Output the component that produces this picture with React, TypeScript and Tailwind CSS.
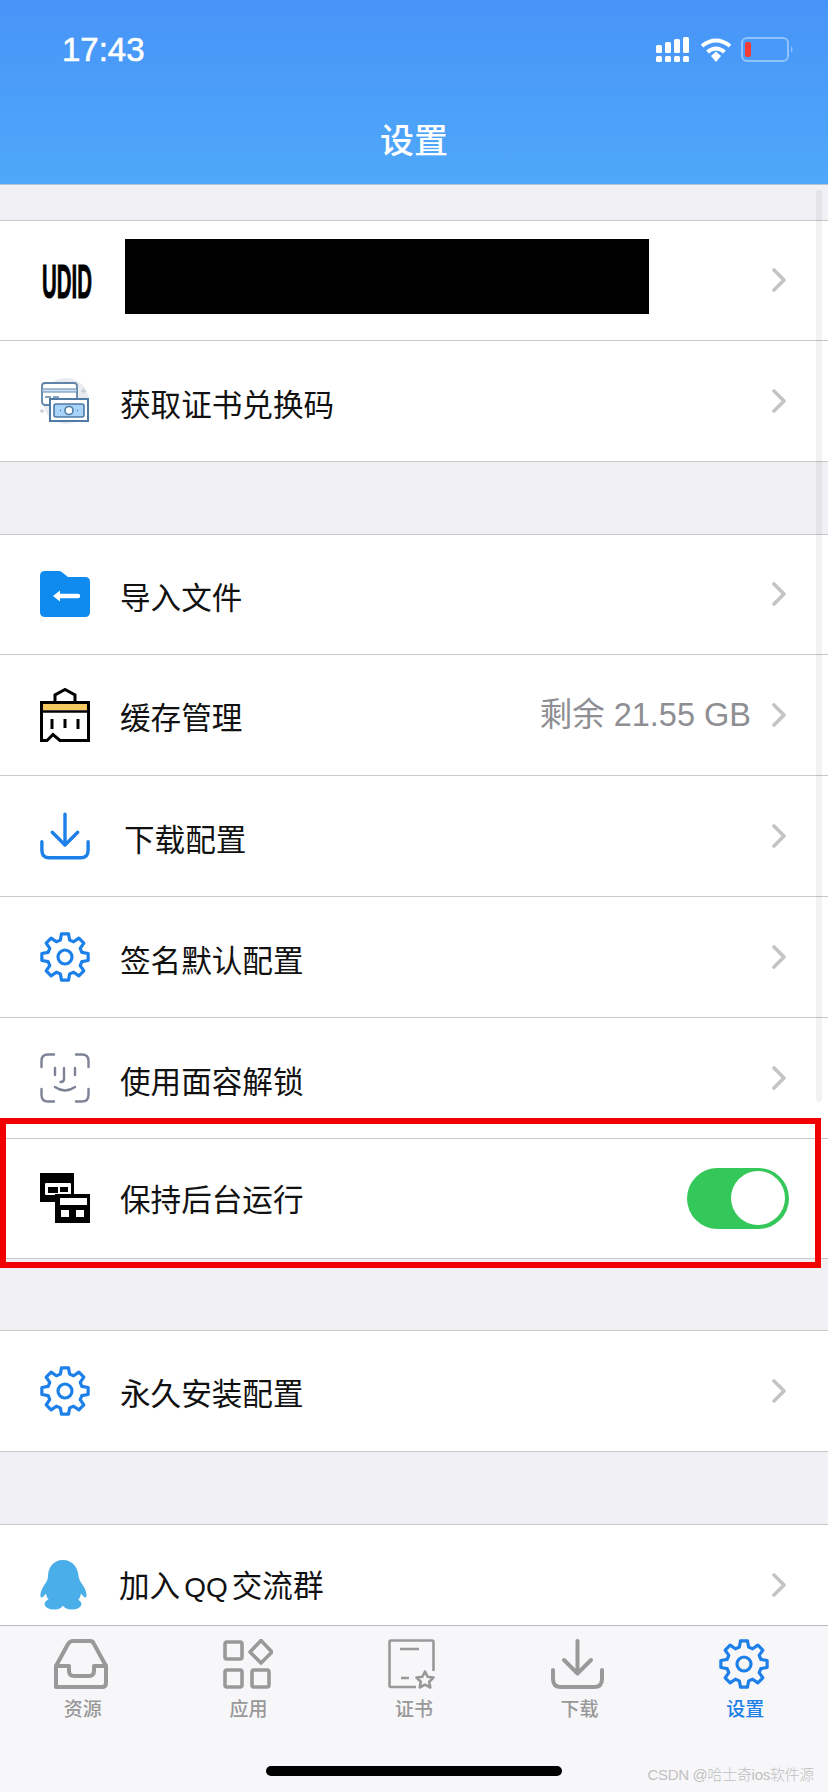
import type { ReactNode } from "react";

const BLUE = "#1c80e8";
const GRAY = "#999999";

function gearPath(size: number, outer: number, inner: number) {
  const c = size / 2;
  const pts: string[] = [];
  for (let i = 0; i < 8; i++) {
    const a = (i * Math.PI) / 4 - Math.PI / 2;
    const offsets: [number, number][] = [
      [-0.27, inner],
      [-0.15, outer],
      [0.15, outer],
      [0.27, inner],
    ];
    offsets.forEach(([d, r]) => {
      pts.push(`${c + r * Math.cos(a + d)},${c + r * Math.sin(a + d)}`);
    });
  }
  return `M${pts.join("L")}Z`;
}

function GearIcon() {
  return (
    <svg width="50" height="50" viewBox="0 0 50 50" fill="none" stroke={BLUE} strokeWidth="3.2" strokeLinejoin="round">
      <path d={gearPath(50, 23.4, 17.5)} />
      <circle cx="25" cy="25" r="7" />
    </svg>
  );
}

function DownloadIcon({ color, sw }: { color: string; sw: number }) {
  return (
    <svg width="53" height="50" viewBox="0 0 53 50" fill="none" stroke={color} strokeWidth={sw} strokeLinecap="round" strokeLinejoin="round">
      <path d="M26.5 2V34" />
      <path d="M13 21L26.5 34.5L40 21" />
      <path d="M2 31V40Q2 48 10 48H43Q51 48 51 40V31" />
    </svg>
  );
}

function UdidIcon() {
  return (
    <svg width="52" height="64" viewBox="0 0 52 64" className="overflow-visible">
      <text
        x="1"
        y="49.500"
        textLength="50"
        lengthAdjust="spacingAndGlyphs"
        fontFamily="Liberation Sans"
        fontWeight="700"
        fontSize="48"
        stroke="#000"
        strokeWidth="1"
      >
        UDID
      </text>
    </svg>
  );
}

function MoneyIcon() {
  return (
    <svg width="50" height="46" viewBox="0 0 50 46" fill="none">
      <circle cx="26" cy="23" r="23" fill="#e9edf1" />
      <rect x="2" y="5" width="35" height="22" rx="3" fill="#fff" stroke="#5f84a8" strokeWidth="1.8" />
      <path d="M2 11H37V14H2Z" fill="#cfe2f5" stroke="#5f84a8" strokeWidth="1" />
      <path d="M5 19H11M13 19H19" stroke="#5f84a8" strokeWidth="1.6" />
      <rect x="10" y="21" width="38" height="22" fill="#fff" stroke="#4e7aa3" strokeWidth="2" />
      <rect x="14" y="26" width="30" height="13" rx="2" fill="#a8d4fb" stroke="#4e7aa3" strokeWidth="1.6" />
      <circle cx="29" cy="32.5" r="4" fill="#fff" stroke="#4e7aa3" strokeWidth="1.6" />
      <path d="M20 32.5H21M37 32.5H38" stroke="#4e7aa3" strokeWidth="1.6" />
      <path d="M41 13H46M43.5 10.5V15.5M0 33H4M2 31V35" stroke="#c5ccd3" strokeWidth="1.4" />
    </svg>
  );
}

function FolderIcon() {
  return (
    <svg width="50" height="46" viewBox="0 0 50 46">
      <path d="M0 5Q0 0 5 0H19Q21 0 23 2L28 6H45Q50 6 50 11V41Q50 46 45 46H5Q0 46 0 41Z" fill="#0f8bf0" />
      <path d="M20 25H38" stroke="#fff" strokeWidth="4.4" strokeLinecap="round" />
      <path d="M13 25L20 19.5V30.5Z" fill="#fff" />
    </svg>
  );
}

function CacheIcon() {
  return (
    <svg width="50" height="54" viewBox="0 0 50 54" fill="none">
      <path d="M3 15.5H47V22H3Z" fill="#f5c95f" />
      <path d="M1.5 14.5H48.5V52.5H20L13 46.5L7 52.5H1.5Z" stroke="#000" strokeWidth="3" />
      <path d="M2 23.5H48" stroke="#000" strokeWidth="2.4" />
      <path d="M15 14V7L25 1.5L35 7V14" stroke="#000" strokeWidth="3" />
      <path d="M12 31V41M25 31V40M38 31V41" stroke="#000" strokeWidth="3" />
    </svg>
  );
}

function FaceIcon() {
  return (
    <svg width="50" height="50" viewBox="0 0 50 50" fill="none" stroke="#7d8296" strokeWidth="2.4" strokeLinecap="round">
      <path d="M1.5 14V8Q1.5 1.5 8 1.5H14" />
      <path d="M36 1.5H42Q48.5 1.5 48.5 8V14" />
      <path d="M1.5 36V42Q1.5 48.5 8 48.5H14" />
      <path d="M36 48.5H42Q48.5 48.5 48.5 42V36" />
      <path d="M15 15V22M35 15V22" />
      <path d="M24 15V26Q24 29 20.5 29" />
      <path d="M15 34Q25 41 35 34" />
    </svg>
  );
}

function KeepIcon() {
  return (
    <svg width="50" height="50" viewBox="0 0 50 50">
      <path d="M0 0H34V29H0Z" fill="#000" />
      <rect x="5" y="10" width="26" height="12" rx="1" fill="#fff" />
      <path d="M8 14H18V20H8ZM20 14H28V19H20Z" fill="#000" />
      <path d="M15 21H50V50H15Z" fill="#000" />
      <path d="M20 25H47V32H20Z" fill="#fff" />
      <path d="M21 37H29V44H21ZM36 37H44V44H36Z" fill="#fff" />
    </svg>
  );
}

function QQIcon() {
  return (
    <svg width="47" height="50" viewBox="0 0 47 50" fill="#4aaee9">
      <path d="M23 0C33 0 38 8 38.500 16C39 19 40 21 42 24C45 28 47 33 46.500 36.500C46 38.500 44 37.500 41 33.500C40.500 37 39 40 36 42H11C8 40 6.500 37 6 33.500C3 37.500 1 38.500 0.500 36.500C0 33 2 28 5 24C7 21 8 19 8 16C8 8 13 0 23 0Z" />
      <ellipse cx="14" cy="44" rx="9.500" ry="5.500" />
      <ellipse cx="32" cy="44" rx="9.500" ry="5.500" />
    </svg>
  );
}

function InboxTab() {
  return (
    <svg width="54" height="50" viewBox="0 0 54 50" fill="none" stroke={GRAY} strokeWidth="4" strokeLinejoin="round" strokeLinecap="round">
      <path d="M2 48V27L14 5Q16 2 19 2H36Q39 2 40 5L52 27V44Q52 48 48 48Z" />
      <path d="M2 27H15V32Q15 37 20 37H35Q40 37 40 32V27H52" />
    </svg>
  );
}

function AppsTab() {
  return (
    <svg width="50" height="50" viewBox="0 0 50 50" fill="none" stroke={GRAY} strokeWidth="3.6" strokeLinejoin="round">
      <rect x="2" y="3" width="17" height="17" rx="2" />
      <path d="M38 1.500L49 13L38 24L27 13Z" />
      <rect x="2" y="31" width="17" height="17" rx="2" />
      <rect x="29" y="31" width="17" height="17" rx="2" />
    </svg>
  );
}

function CertTab() {
  return (
    <svg width="48" height="50" viewBox="0 0 48 50" fill="none" stroke={GRAY} strokeWidth="2.6" strokeLinejoin="round">
      <path d="M28 48H3Q1.500 48 1.500 46.500V3Q1.500 1.500 3 1.500H44Q45.500 1.500 45.500 3V32" />
      <path d="M12 10H31M13 39H21" />
      <path d="M37 32.500L39.600 37.800L45.500 38.600L41.200 42.700L42.300 48.500L37 45.700L31.700 48.500L32.800 42.700L28.500 38.600L34.400 37.800Z" />
    </svg>
  );
}

function SignalIcon() {
  const xs = [0, 9, 18, 27];
  const tops = [8, 5, 2, 0];
  return (
    <svg width="33" height="25" viewBox="0 0 33 25" fill="#fff">
      {xs.map((x, i) => (
        <g key={x}>
          <rect x={x} y={tops[i]} width="6" height={16 - tops[i]} rx="1.500" />
          <rect x={x} y="19" width="6" height="6" rx="1.500" />
        </g>
      ))}
    </svg>
  );
}

function WifiIcon() {
  return (
    <svg width="32" height="25" viewBox="0 0 32 25" fill="none" stroke="#fff" strokeWidth="4">
      <path d="M2 9Q16 -2 30 9" />
      <path d="M7.500 15Q16 8 24.500 15" />
      <path d="M11 19L16 14.500L21 19L16 25Z" fill="#fff" stroke="none" />
    </svg>
  );
}

function BatteryIcon() {
  return (
    <svg width="53" height="25" viewBox="0 0 53 25" fill="none">
      <rect x="1" y="1" width="46" height="23" rx="5" stroke="#fff" strokeOpacity="0.4" strokeWidth="2" />
      <rect x="4" y="5" width="6" height="15" rx="2" fill="#f43a34" />
      <path d="M50 9Q53 12.500 50 16Z" fill="#fff" fillOpacity="0.4" />
    </svg>
  );
}

function Chevron() {
  return (
    <svg width="14" height="24" viewBox="0 0 14 24" fill="none" stroke="#c4c4c6" strokeWidth="3.6" strokeLinecap="round" strokeLinejoin="round">
      <path d="M2 2L12 12L2 22" />
    </svg>
  );
}

function Row({
  icon,
  children,
  right,
  labelClass = "ml-[30px] pt-[8px]",
}: {
  icon: ReactNode;
  children?: ReactNode;
  right?: ReactNode;
  labelClass?: string;
}) {
  return (
    <div className="flex h-[120.8px] shrink-0 items-center border-b border-[#c9c9c9] bg-white pl-[40px] pr-[42px]">
      <div className="flex w-[50px] shrink-0 justify-start">{icon}</div>
      <div className={`flex-1 text-[30.6px] leading-[40px] text-[#111111] ${labelClass}`}>{children}</div>
      {right}
      <Chevron />
    </div>
  );
}

const tabs = [
  { label: "资源", icon: <InboxTab />, iconClass: "-ml-[3px]" },
  { label: "应用", icon: <AppsTab />, iconClass: "" },
  { label: "证书", icon: <CertTab />, iconClass: "-ml-[3px]" },
  { label: "下载", icon: <DownloadIcon color={GRAY} sw={4} />, iconClass: "-ml-[4px]" },
  { label: "设置", icon: <GearIcon />, iconClass: "-ml-[2px]", active: true },
];

export default function App() {
  return (
    <div className="relative flex h-[1792px] w-[828px] flex-col overflow-hidden bg-[#f0f0f5] [font-family:'Liberation_Sans','Noto_Sans_CJK_SC',sans-serif]">
      <header className="h-[185px] shrink-0 border-b border-[#b5c4d4] bg-gradient-to-b from-[#4794f8] to-[#4fa8f9] text-white">
        <div className="flex items-center justify-between pl-[62px] pr-[34px] pt-[31px]">
          <span className="text-[33px] leading-[38px] [-webkit-text-stroke:0.6px_white]">17:43</span>
          <div className="-mt-[2px] flex items-center gap-[12px]">
            <SignalIcon />
            <div className="-ml-[1px] mr-[-3px]">
              <WifiIcon />
            </div>
            <BatteryIcon />
          </div>
        </div>
        <h1 className="mt-[50px] text-center text-[34px] font-medium leading-[44px]">设置</h1>
      </header>

      <main className="flex min-h-0 flex-1 flex-col overflow-hidden">
        <div className="mt-[35px] border-t border-[#c9c9c9]">
          <div className="flex h-[119.8px] items-center border-b border-[#c9c9c9] bg-white pl-[41px] pr-[42px]">
            <div className="w-[84px] shrink-0">
              <UdidIcon />
            </div>
            <div className="mb-[7px] h-[75px] w-[524px] bg-black" />
            <div className="flex-1" />
            <Chevron />
          </div>
          <Row icon={<MoneyIcon />}>获取证书兑换码</Row>
        </div>

        <div className="mt-[72px] border-t border-[#c9c9c9]">
          <Row icon={<FolderIcon />}>导入文件</Row>
          <Row
            icon={<CacheIcon />}
            labelClass="ml-[30px] pt-[5px]"
            right={<span className="mr-[21px] text-[32.5px] text-[#8e8e93]">剩余 21.55 GB</span>}
          >
            缓存管理
          </Row>
          <Row icon={<DownloadIcon color={BLUE} sw={3.6} />} labelClass="ml-[34px] pt-[8px]">
            下载配置
          </Row>
          <Row icon={<GearIcon />} labelClass="ml-[30px] pt-[9px]">
            签名默认配置
          </Row>
          <Row icon={<FaceIcon />} labelClass="ml-[30px] pt-[9px]">
            使用面容解锁
          </Row>
          <div className="flex h-[120.8px] items-center border-b border-[#c9c9c9] bg-white pl-[40px] pr-[39px]">
            <KeepIcon />
            <div className="ml-[30px] flex-1 pt-[3px] text-[30.6px] leading-[40px] text-[#111111]">保持后台运行</div>
            <div className="flex h-[61px] w-[102px] items-center justify-end rounded-full bg-[#34c759] pr-[4px]">
              <div className="h-[54px] w-[54px] rounded-full bg-white" />
            </div>
          </div>
        </div>

        <div className="mt-[71px] border-t border-[#c9c9c9]">
          <Row icon={<GearIcon />} labelClass="ml-[30px] pt-[5px]">
            永久安装配置
          </Row>
        </div>

        <div className="mt-[72px] shrink-0 border-t border-[#c9c9c9]">
          <Row icon={<QQIcon />} labelClass="ml-[29px] pt-[3px] [word-spacing:-4.5px]">
            加入 <span className="text-[28px]">QQ</span> 交流群
          </Row>
        </div>
      </main>

      <nav className="h-[167px] shrink-0 border-t border-[#b9b9b9] bg-[#f7f7f9]">
        <div className="grid grid-cols-5 pt-[13px]">
          {tabs.map((tab) => (
            <div key={tab.label} className="flex flex-col items-center">
              <div className={`flex h-[50px] items-center ${tab.iconClass}`}>{tab.icon}</div>
              <span className={`mt-[8px] text-[19px] font-medium leading-[26px] ${tab.active ? "text-[#1c80e8]" : "text-[#999999]"}`}>
                {tab.label}
              </span>
            </div>
          ))}
        </div>
      </nav>

      {/* scroll indicator */}
      <div className="absolute left-[816px] top-[190px] h-[912px] w-[6px] rounded-full bg-black/5" />
      {/* red marker from the screenshot */}
      <div className="absolute left-0 top-[1118px] h-[150px] w-[821px] border-[6px] border-[#f20000]" />
      <div className="absolute left-[266px] top-[1766px] h-[10px] w-[296px] rounded-full bg-black" />
      <span className="absolute right-[14px] top-[1764px] text-[15px] font-light tracking-[-0.3px] text-[#c0c0c0]">CSDN @哈士奇ios软件源</span>
    </div>
  );
}
